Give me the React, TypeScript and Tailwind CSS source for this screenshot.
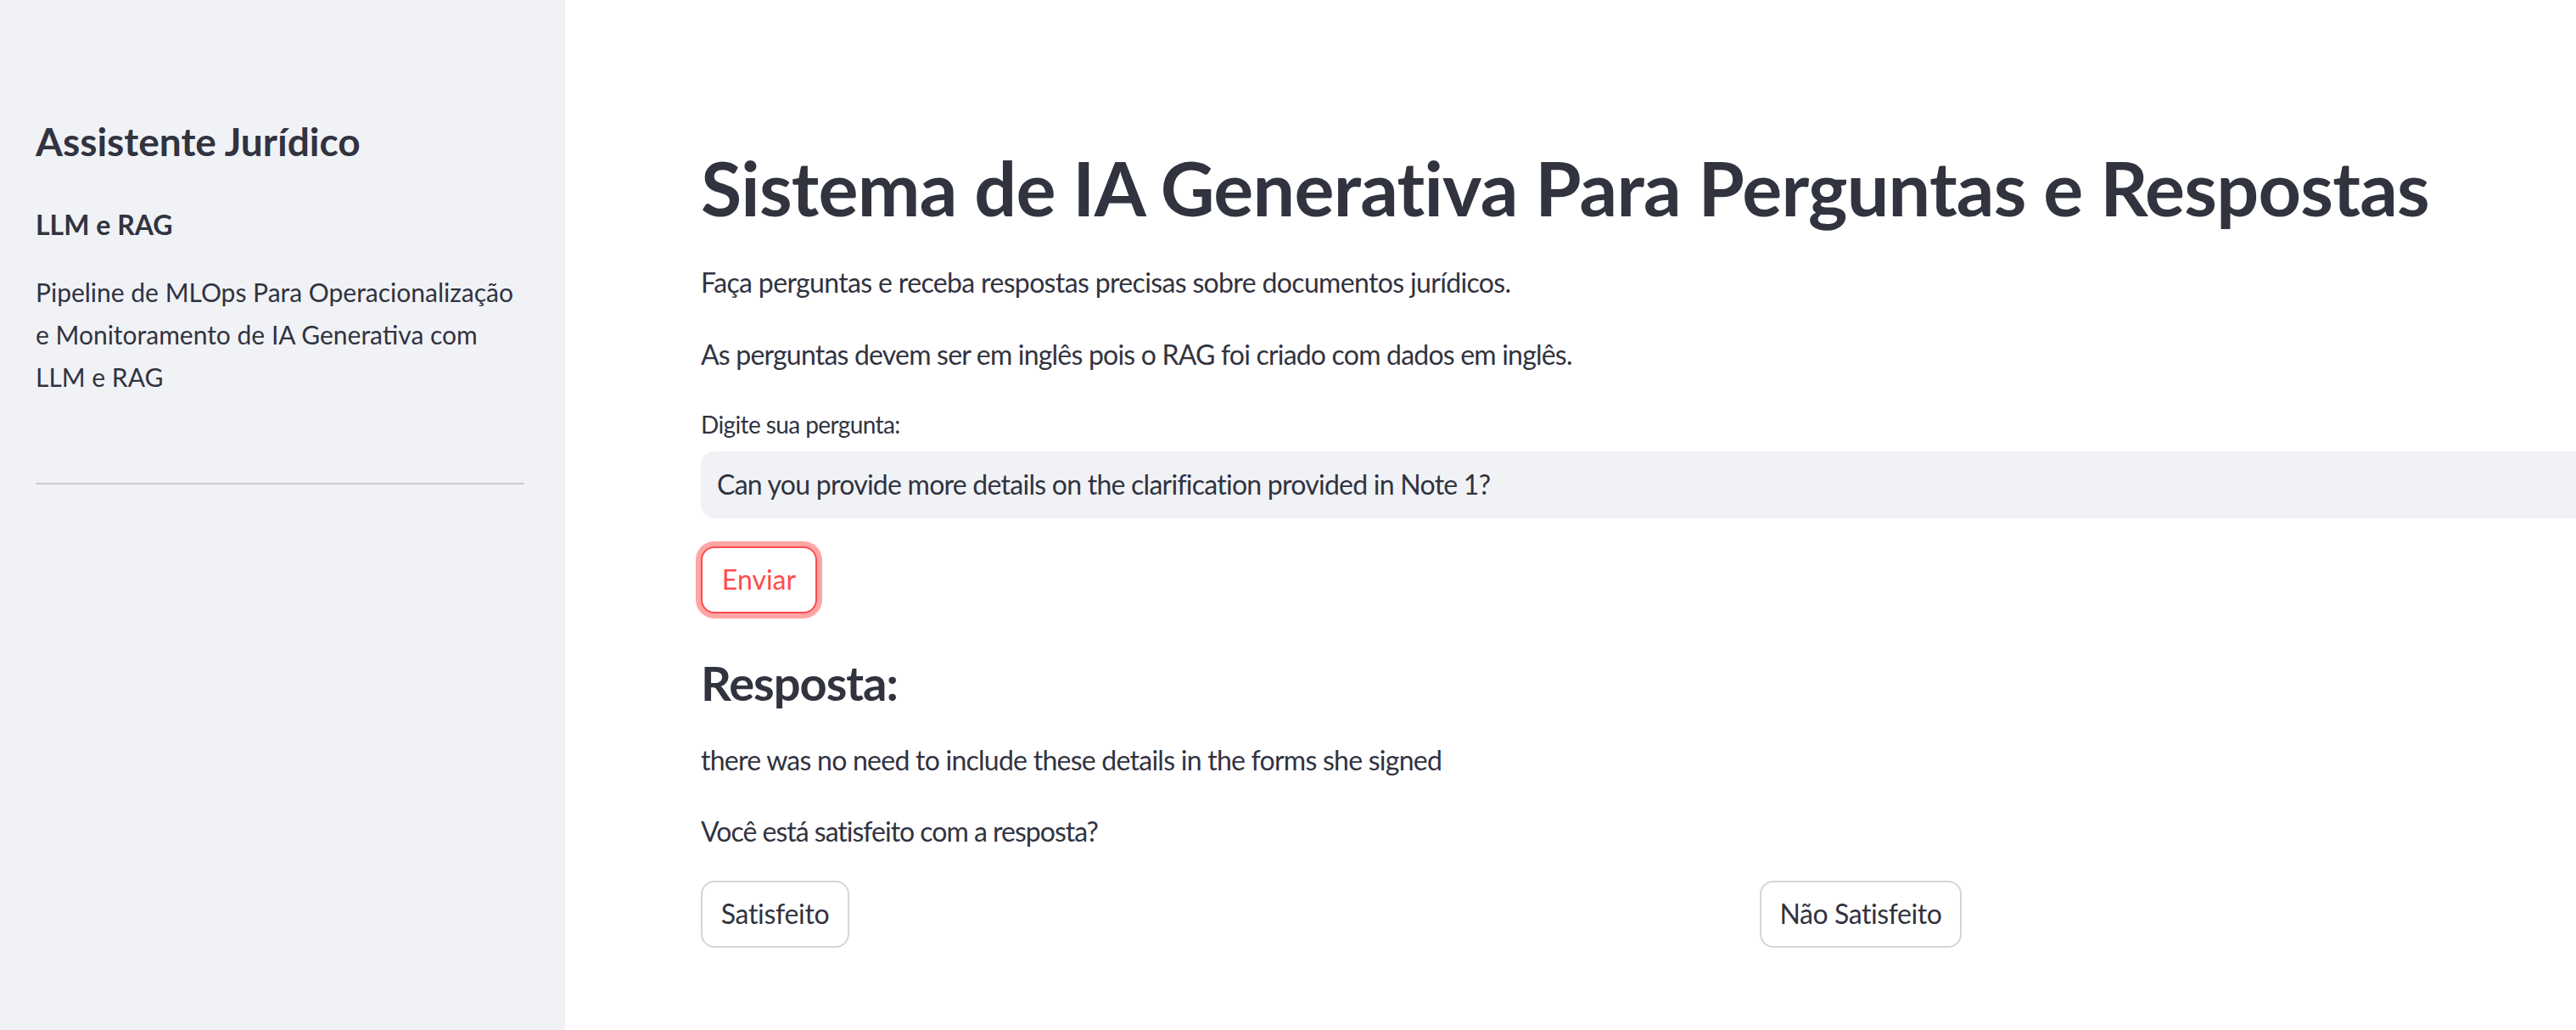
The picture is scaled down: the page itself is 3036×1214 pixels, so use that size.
import React from "react";

export default function App() {
  return (
    <div
      className="flex h-screen w-screen overflow-hidden bg-white text-[#31333f]"
      style={{ fontFamily: '"Lato", "Noto Sans", sans-serif' }}
    >
      <aside className="w-[666px] shrink-0 bg-[#f0f2f6] pl-[42px] pr-[48px] pt-[139px]">
        <h2 className="text-[46px] leading-[1.2] font-bold">Assistente Jurídico</h2>
        <p className="mt-[45px] text-[32px] leading-[51px] font-bold">LLM e RAG</p>
        <p className="mt-[29px] text-[30px] leading-[50px] whitespace-nowrap">
          Pipeline de MLOps Para Operacionalização
          <br />
          e Monitoramento de IA Generativa com
          <br />
          LLM e RAG
        </p>
        <div className="mt-[100px] h-[2px] bg-[#c9cbd0]" />
      </aside>

      <main className="ml-[160px] w-[2464px] shrink-0 pt-[169px]">
        <h1 className="text-[88px] leading-[1.2] font-bold whitespace-nowrap tracking-[-0.75px]">
          Sistema de IA Generativa Para Perguntas e Respostas
        </h1>
        <p className="mt-[32px] text-[32px] leading-[51px] tracking-[-0.65px]">
          Faça perguntas e receba respostas precisas sobre documentos jurídicos.
        </p>
        <p className="mt-[34px] text-[32px] leading-[51px] tracking-[-0.8px]">
          As perguntas devem ser em inglês pois o RAG foi criado com dados em inglês.
        </p>
        <label className="mt-[37px] block text-[28px] leading-[40px] tracking-[-0.6px]">Digite sua pergunta:</label>
        <div className="mt-[12px] flex h-[79px] items-center rounded-[16px] bg-[#f0f2f6] pl-[19px] text-[32px] tracking-[-0.75px]">
          Can you provide more details on the clarification provided in Note 1?
        </div>
        <button
          className="mt-[33px] flex h-[79px] w-[137px] items-center justify-center rounded-[16px] border-2 border-[#ff4b4b] bg-white text-[32px] text-[#ff4b4b] shadow-[0_0_0_6px_rgba(255,75,75,0.5)]"
        >
          Enviar
        </button>
        <h3 className="mt-[48px] text-[56px] leading-[1.2] font-bold tracking-[-1px]">Resposta:</h3>
        <p className="mt-[32px] text-[32px] leading-[51px] tracking-[-0.75px]">
          there was no need to include these details in the forms she signed
        </p>
        <p className="mt-[33px] text-[32px] leading-[51px] tracking-[-1px]">Você está satisfeito com a resposta?</p>
        <div className="mt-[33px] grid grid-cols-2 gap-[32px]">
          <div>
            <button className="flex h-[79px] w-[175px] items-center justify-center rounded-[16px] border-2 border-[#d6d6d9] bg-white text-[32px] tracking-[-0.3px]">
              Satisfeito
            </button>
          </div>
          <div>
            <button className="flex h-[79px] w-[238px] items-center justify-center rounded-[16px] border-2 border-[#d6d6d9] bg-white text-[32px] tracking-[-0.4px]">
              Não Satisfeito
            </button>
          </div>
        </div>
      </main>
    </div>
  );
}
